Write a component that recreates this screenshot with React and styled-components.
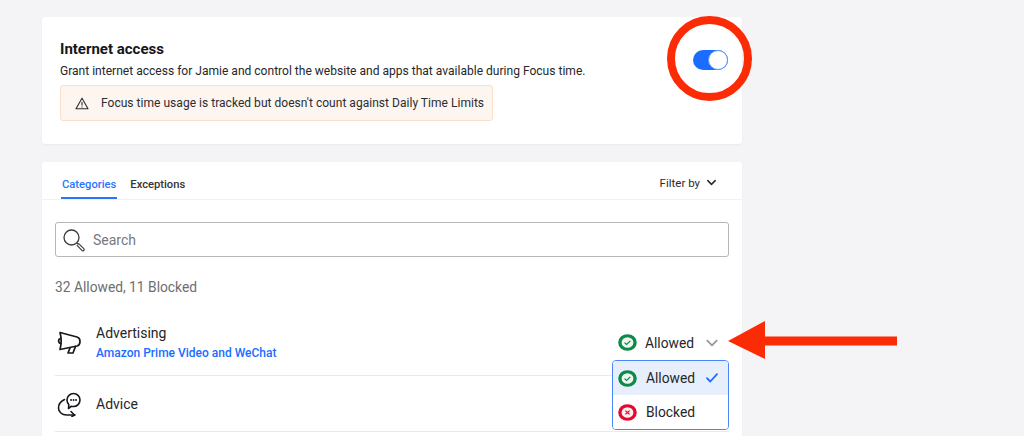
import React from "react";
import styled, { createGlobalStyle } from "styled-components";

const GlobalStyle = createGlobalStyle`
  html, body {
    margin: 0;
    height: 100%;
    overflow: hidden;
    background: #f4f4f7;
    font-family: Roboto, "Liberation Sans", sans-serif;
  }
  svg {
    flex-shrink: 0;
  }
`;

const Page = styled.div`
  position: relative;
  width: 1024px;
  height: 436px;
  overflow: hidden;
  padding: 17px 0 0 42px;
  box-sizing: border-box;
`;

const Card = styled.section`
  width: 700px;
  background: #fff;
  border-radius: 3px;
  box-shadow: 0 1px 2px rgba(30, 40, 60, 0.05);
`;

const AccessCard = styled(Card)`
  height: 127px;
  margin-bottom: 18px;
  padding: 23px 18px 0;
  box-sizing: border-box;
  display: flex;
  justify-content: space-between;
`;

const AccessText = styled.div`
  display: flex;
  flex-direction: column;
  align-items: flex-start;
`;

const Title = styled.h2`
  margin: 0;
  font-size: 15px;
  line-height: 18px;
  font-weight: 700;
  color: #15161a;
`;

const Description = styled.p`
  margin: 4px 0 0;
  font-size: 12.05px;
  line-height: 18px;
  color: #26272b;
`;

const Notice = styled.div`
  margin-top: 5px;
  width: 433px;
  height: 36px;
  box-sizing: border-box;
  padding-left: 14px;
  display: flex;
  align-items: center;
  gap: 12px;
  background: #fdf5ef;
  border: 1px solid #fbdfc9;
  border-radius: 3px;
  font-size: 12px;
  letter-spacing: 0.03px;
  white-space: nowrap;
  color: #2c2d31;
`;

const Toggle = styled.div`
  width: 35px;
  height: 20px;
  margin: 10px 0 0;
  position: relative;
  left: 4px;
  box-sizing: border-box;
  background: #1a6dff;
  border-radius: 10px;
  display: flex;
  justify-content: flex-end;
`;

const Knob = styled.span`
  width: 20px;
  height: 20px;
  box-sizing: border-box;
  background: #fff;
  border: 1px solid #5e97ff;
  border-radius: 50%;
`;

const TabBar = styled.div`
  height: 37px;
  padding: 0 25px 0 19px;
  display: flex;
  align-items: stretch;
  justify-content: space-between;
  border-bottom: 1px solid #f0f1f3;
`;

const Tabs = styled.div`
  display: flex;
  gap: 12px;
`;

const Tab = styled.div`
  padding: 16px 1px 0;
  font-size: 11.2px;
  line-height: 14px;
  font-weight: 500;
  color: ${(props) => (props.$active ? "#2c74ff" : "#333438")};
  border-bottom: 2px solid ${(props) => (props.$active ? "#2c74ff" : "transparent")};
`;

const FilterBy = styled.div`
  display: flex;
  align-items: center;
  gap: 6px;
  padding-top: 4px;
  font-size: 11.5px;
  color: #2b2c30;
`;

const CardBody = styled.div`
  padding: 22px 13px 20px;
`;

const SearchBox = styled.div`
  height: 35px;
  box-sizing: border-box;
  padding-left: 6px;
  display: flex;
  align-items: center;
  gap: 7px;
  border: 1px solid #b5b6b9;
  border-radius: 3px;
  font-size: 14px;
  color: #77787c;
`;

const Summary = styled.div`
  margin-top: 21px;
  font-size: 13.8px;
  line-height: 18px;
  color: #6d6e72;
`;

const Row = styled.div`
  height: ${(props) => props.$height}px;
  padding-top: ${(props) => props.$offset}px;
  box-sizing: border-box;
  display: flex;
  align-items: center;
  padding-left: 2px;
  gap: 14px;
  border-bottom: 1px solid #e9eaec;
`;

const RowText = styled.div`
  flex: 1;
  display: flex;
  flex-direction: column;
  gap: 4px;
`;

const RowName = styled.div`
  font-size: 14px;
  line-height: 17px;
  color: #25262a;
`;

const RowApps = styled.div`
  font-size: 12px;
  line-height: 15px;
  font-weight: 500;
  color: #1a6dff;
`;

const Status = styled.div`
  display: flex;
  align-items: center;
  margin-right: 10px;
  font-size: 13.8px;
  color: #25262a;
  gap: 8px;
`;

const StatusChevron = styled.span`
  display: flex;
  margin-left: 3px;
`;

const Menu = styled.div`
  position: absolute;
  left: 612px;
  top: 360px;
  width: 117px;
  height: 70px;
  box-sizing: border-box;
  background: #fff;
  border: 1px solid #4a86f7;
  border-radius: 4px;
  overflow: hidden;
`;

const MenuItem = styled.div`
  height: 34px;
  box-sizing: border-box;
  padding: 0 10px 0 5px;
  display: flex;
  align-items: center;
  gap: 9px;
  font-size: 13.8px;
  color: #25262a;
  background: ${(props) => (props.$selected ? "#e7effc" : "#fff")};
`;

const MenuCheck = styled.span`
  display: flex;
  margin-left: auto;
`;

const Annotation = styled.svg`
  position: absolute;
  left: 0;
  top: 0;
  pointer-events: none;
`;

const Warning = () => (
  <svg width="14" height="13" viewBox="0 0 14 13" fill="none" stroke="#2c2d31" strokeWidth="1.1" strokeLinejoin="round">
    <path d="M7 1.2 13 11.8H1Z" />
    <path d="M7 5v3.6M7 9.6v.9" />
  </svg>
);

const Chevron = ({ color, width = 1.6, size = 12 }) => (
  <svg width={size} height={size} viewBox="0 0 12 12" fill="none" stroke={color} strokeWidth={width} strokeLinecap="round" strokeLinejoin="round">
    <path d="M2 4 6 8 10 4" />
  </svg>
);

const SearchIcon = () => (
  <svg width="24" height="24" viewBox="0 0 24 24" fill="none" stroke="#3c3d41" strokeWidth="1.3">
    <circle cx="9.5" cy="9.5" r="7.500" />
    <path d="M15 15 16.500 16.500" />
    <path d="M16.400 15.400 21.800 20.600a1.300 1.300 0 0 1-1.900 1.800L14.800 17.200" strokeWidth="1.200" />
  </svg>
);

const Megaphone = () => (
  <svg width="25" height="24" viewBox="0 0 25 24" fill="none" stroke="#17181b" strokeWidth="1.700" strokeLinejoin="round" strokeLinecap="round">
    <path d="M3 1.500 20 6C24 7 24 14 20 15L3 18.500C4.500 13 4.500 7 3 1.500Z" />
    <path d="M3.500 7.500C1 8 1 12 3.800 12.500" />
    <path d="M13 17 11 22H16L18.500 15.500" />
  </svg>
);

const AdviceIcon = () => (
  <svg width="25" height="25" viewBox="0 0 25 25" fill="none" stroke="#17181b" strokeWidth="1.600" strokeLinecap="round" strokeLinejoin="round">
    <path d="M10 8C10 4.500 13 1.500 16.500 1.500S23 4.500 23 8 20 14.500 16.500 14.500c-.7 0-1.400-.1-2-.3L11.500 16.500 11.800 12.500C10.700 11.300 10 9.800 10 8Z" />
    <path d="M7.500 7.500C3.500 9.500 1.500 12.500 1.500 16c0 4 3.500 7 8 7H18" />
    <path d="M14 19.500 17.500 23 15 24.500" />
    <path d="M14 8h.1M16.500 8h.1M19 8h.1" strokeWidth="1.800" />
  </svg>
);

const AllowedIcon = () => (
  <svg width="19" height="17" viewBox="0 0 18 18" preserveAspectRatio="none">
    <circle cx="9" cy="9" r="7.200" fill="#eef6f0" stroke="#0d8a47" strokeWidth="3.200" />
    <path d="M6.200 9.200 8.100 11 11.700 7.200" fill="none" stroke="#0d8a47" strokeWidth="1.200" />
  </svg>
);

const BlockedIcon = () => (
  <svg width="19" height="17" viewBox="0 0 18 18" preserveAspectRatio="none">
    <circle cx="9" cy="9" r="7.200" fill="#fdeef0" stroke="#e5092e" strokeWidth="3.200" />
    <path d="M7 7 11 11M11 7 7 11" fill="none" stroke="#e5092e" strokeWidth="1.200" />
  </svg>
);

const CheckIcon = () => (
  <svg width="12" height="10" viewBox="0 0 12 10" fill="none" stroke="#1a6dff" strokeWidth="1.800" strokeLinecap="round" strokeLinejoin="round">
    <path d="M1 5.200 4.300 8.500 11 1.200" />
  </svg>
);

export default function App() {
  return (
    <>
      <GlobalStyle />
      <Page>
        <AccessCard>
          <AccessText>
            <Title>Internet access</Title>
            <Description>
              Grant internet access for Jamie and control the website and apps that available during Focus time.
            </Description>
            <Notice>
              <Warning />
              Focus time usage is tracked but doesn't count against Daily Time Limits
            </Notice>
          </AccessText>
          <Toggle>
            <Knob />
          </Toggle>
        </AccessCard>

        <Card>
          <TabBar>
            <Tabs>
              <Tab $active>Categories</Tab>
              <Tab>Exceptions</Tab>
            </Tabs>
            <FilterBy>
              Filter by
              <Chevron color="#2b2c30" width={1.7} size={11} />
            </FilterBy>
          </TabBar>
          <CardBody>
            <SearchBox>
              <SearchIcon />
              Search
            </SearchBox>
            <Summary>32 Allowed, 11 Blocked</Summary>
            <Row $height={80} $offset={14}>
              <Megaphone />
              <RowText>
                <RowName>Advertising</RowName>
                <RowApps>Amazon Prime Video and WeChat</RowApps>
              </RowText>
              <Status>
                <AllowedIcon />
                Allowed
                <StatusChevron>
                  <Chevron color="#97989b" size={14} />
                </StatusChevron>
              </Status>
            </Row>
            <Row $height={56} $offset={2}>
              <AdviceIcon />
              <RowText>
                <RowName>Advice</RowName>
              </RowText>
            </Row>
          </CardBody>
        </Card>

        <Menu>
          <MenuItem $selected>
            <AllowedIcon />
            Allowed
            <MenuCheck>
              <CheckIcon />
            </MenuCheck>
          </MenuItem>
          <MenuItem>
            <BlockedIcon />
            Blocked
          </MenuItem>
        </Menu>

        <Annotation width="1024" height="436" viewBox="0 0 1024 436">
          <circle cx="709.500" cy="58.500" r="38.500" fill="none" stroke="#fb2b06" strokeWidth="8" />
          <path d="M728 341 765 321V336.500H897V345.500H765V359Z" fill="#fb2b06" />
        </Annotation>
      </Page>
    </>
  );
}
